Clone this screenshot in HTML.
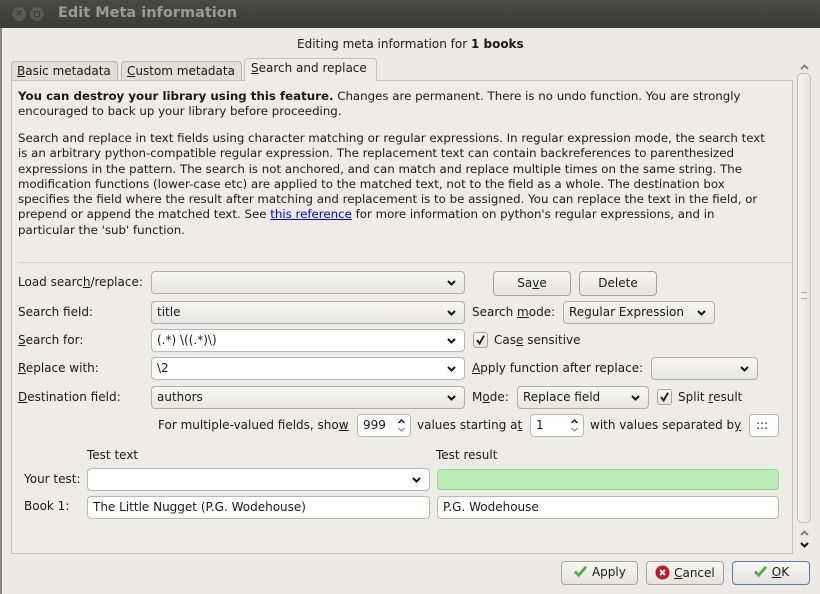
<!DOCTYPE html>
<html><head><meta charset="utf-8"><style>
*{margin:0;padding:0;box-sizing:border-box}
body{width:820px;height:594px;overflow:hidden;background:#edeae5;font-family:"DejaVu Sans","Liberation Sans",sans-serif;font-size:12px;color:#1a1a1a;position:relative}
.a{position:absolute;white-space:nowrap}
.tb{left:0;top:0;width:820px;height:28px;background:linear-gradient(#4a4945,#3c3b37);}
.cb{border:1px solid #b3ada4;border-radius:4px;background:linear-gradient(#f7f6f4,#e9e6e1);height:23px;padding:3px 0 0 5px}
.ed{border:1px solid #bfb8ae;border-radius:4px;background:#fff;height:23px;padding:3px 0 0 5px}
.arr{position:absolute;right:8px;top:8px;width:9px;height:6px}
.btn{border:1px solid #aaa39a;border-radius:4px;background:linear-gradient(#f8f7f5,#e6e2dc);height:25px;text-align:center;padding-top:4px}
.chk{width:15px;height:16px;border:1px solid #aaa39a;border-radius:3px;background:linear-gradient(#fbfaf8,#e6e2dc)}
u{text-decoration:underline}
.sp{position:absolute;right:4px;top:3px;width:9px;height:15px}
</style></head><body>
<svg width="0" height="0" style="position:absolute"><defs>
<symbol id="dn" viewBox="0 0 9 6"><path d="M1 1L4.5 4.5L8 1" fill="none" stroke="#111" stroke-width="2"/></symbol>
<symbol id="ud" viewBox="0 0 9 15"><path d="M1.5 5L4.5 2L7.5 5" fill="none" stroke="#222" stroke-width="1.5"/><path d="M1.5 10L4.5 13L7.5 10" fill="none" stroke="#999" stroke-width="1.5"/></symbol>
<symbol id="ck" viewBox="0 0 15 16"><path d="M3.5 8L6.5 12L11.5 3" fill="none" stroke="#222" stroke-width="2.2"/></symbol>
<symbol id="gk" viewBox="0 0 16 14"><path d="M2 7L6 11L14 2" fill="none" stroke="#56ac43" stroke-width="3"/></symbol>
</defs></svg>
<div class="a tb"></div>
<div class="a" style="left:12px;top:7px;width:14px;height:14px;border-radius:50%;background:#5a5954;color:#3c3b37;font-size:10px;text-align:center;line-height:14px;font-weight:bold">×</div>
<div class="a" style="left:30px;top:7px;width:14px;height:14px;border-radius:50%;background:#5a5954"><div style="margin:4px;width:6px;height:6px;border:1px solid #3c3b37"></div></div>
<div class="a" style="left:58px;top:5px;color:#9c9a94;font-weight:bold;font-size:14.5px">Edit Meta information</div>
<div class="a" style="left:0;top:28px;width:2px;height:566px;background:#8a857e"></div>

<div class="a" style="left:297px;top:37px">Editing meta information for <b>1 books</b></div>

<div class="a" style="left:11px;top:61px;width:107px;height:20px;border:1px solid #bdb6ad;border-bottom:none;border-radius:4px 4px 0 0;background:#e2ded8;padding:2px 0 0 5px"><u>B</u>asic metadata</div>
<div class="a" style="left:121px;top:61px;width:121px;height:20px;border:1px solid #bdb6ad;border-bottom:none;border-radius:4px 4px 0 0;background:#e2ded8;padding:2px 0 0 5px"><u>C</u>ustom metadata</div>
<div class="a" style="left:11px;top:80px;width:782px;height:474px;border:1px solid #c7c1b8;background:#efece8"></div>
<div class="a" style="left:244px;top:58px;width:133px;height:23px;border:1px solid #c7c1b8;border-bottom:none;border-radius:4px 4px 0 0;background:#efece8;padding:2px 0 0 6px"><u>S</u>earch and replace</div>

<div class="a" style="left:18px;top:89px;line-height:15.3px;font-size:11.8px"><b>You can destroy your library using this feature.</b> Changes are permanent. There is no undo function. You are strongly<br>encouraged to back up your library before proceeding.</div>
<div class="a" style="left:18px;top:131px;line-height:15.3px;font-size:11.8px">Search and replace in text fields using character matching or regular expressions. In regular expression mode, the search text<br>is an arbitrary python-compatible regular expression. The replacement text can contain backreferences to parenthesized<br>expressions in the pattern. The search is not anchored, and can match and replace multiple times on the same string. The<br>modification functions (lower-case etc) are applied to the matched text, not to the field as a whole. The destination box<br>specifies the field where the result after matching and replacement is to be assigned. You can replace the text in the field, or<br>prepend or append the matched text. See <span style="color:#0000ee;text-decoration:underline">this reference</span> for more information on python's regular expressions, and in<br>particular the 'sub' function.</div>
<div class="a" style="left:18px;top:262px;width:775px;height:1px;background:#d8d3cc"></div>

<div class="a" style="left:18px;top:275px">Load searc<u>h</u>/replace:</div>
<div class="a cb" style="left:151px;top:271px;width:314px"><svg class="arr"><use href="#dn"/></svg></div>
<div class="a btn" style="left:493px;top:271px;width:78px">Sa<u>v</u>e</div>
<div class="a btn" style="left:579px;top:271px;width:78px">Delete</div>

<div class="a" style="left:18px;top:305px">Search field:</div>
<div class="a cb" style="left:151px;top:301px;width:314px">title<svg class="arr"><use href="#dn"/></svg></div>
<div class="a" style="left:472px;top:305px">Search <u>m</u>ode:</div>
<div class="a cb" style="left:563px;top:301px;width:152px">Regular Expression<svg class="arr"><use href="#dn"/></svg></div>

<div class="a" style="left:18px;top:333px"><u>S</u>earch for:</div>
<div class="a ed" style="left:151px;top:329px;width:314px">(.*) \((.*)\)<svg class="arr"><use href="#dn"/></svg></div>
<div class="a chk" style="left:473px;top:332px"><svg width="13" height="14"><use href="#ck"/></svg></div>
<div class="a" style="left:494px;top:333px">Cas<u>e</u> sensitive</div>

<div class="a" style="left:18px;top:361px"><u>R</u>eplace with:</div>
<div class="a ed" style="left:151px;top:357px;width:314px">\2<svg class="arr"><use href="#dn"/></svg></div>
<div class="a" style="left:472px;top:361px"><u>A</u>pply function after replace:</div>
<div class="a cb" style="left:651px;top:357px;width:107px"><svg class="arr"><use href="#dn"/></svg></div>

<div class="a" style="left:18px;top:390px"><u>D</u>estination field:</div>
<div class="a cb" style="left:151px;top:386px;width:314px">authors<svg class="arr"><use href="#dn"/></svg></div>
<div class="a" style="left:472px;top:390px">M<u>o</u>de:</div>
<div class="a cb" style="left:517px;top:386px;width:132px">Replace field<svg class="arr"><use href="#dn"/></svg></div>
<div class="a chk" style="left:657px;top:389px"><svg width="13" height="14"><use href="#ck"/></svg></div>
<div class="a" style="left:678px;top:390px">Split <u>r</u>esult</div>

<div class="a" style="left:158px;top:418px">For multiple-valued fields, sho<u>w</u></div>
<div class="a ed" style="left:357px;top:414px;width:54px">999<svg class="sp"><use href="#ud"/></svg></div>
<div class="a" style="left:417px;top:418px">values starting a<u>t</u></div>
<div class="a ed" style="left:530px;top:414px;width:54px">1<svg class="sp"><use href="#ud"/></svg></div>
<div class="a" style="left:590px;top:418px">with values separated b<u>y</u></div>
<div class="a ed" style="left:749px;top:414px;width:30px;padding-left:6px">:::</div>

<div class="a" style="left:87px;top:448px">Test text</div>
<div class="a" style="left:436px;top:448px">Test result</div>
<div class="a" style="left:24px;top:472px">Your test:</div>
<div class="a ed" style="left:87px;top:468px;width:343px"><svg class="arr"><use href="#dn"/></svg></div>
<div class="a" style="left:437px;top:469px;width:342px;height:21px;border:1px solid #8fd88a;border-radius:4px;background:#bcecb6"></div>
<div class="a" style="left:24px;top:499px">Book 1:</div>
<div class="a ed" style="left:87px;top:496px;width:343px">The Little Nugget (P.G. Wodehouse)</div>
<div class="a ed" style="left:437px;top:496px;width:342px">P.G. Wodehouse</div>

<svg class="a" style="left:800px;top:64px" width="9" height="6"><path d="M1 5L4.5 1.5L8 5" fill="none" stroke="#777" stroke-width="1.8"/></svg>
<div class="a" style="left:797px;top:73px;width:14px;height:450px;border:1px solid #c6c0b7;border-radius:5px;background:linear-gradient(90deg,#f5f4f2,#e8e5e0)"></div>
<div class="a" style="left:801px;top:292px;width:6px;height:7px;border-top:1px solid #aaa;border-bottom:1px solid #aaa"></div>
<svg class="a" style="left:800px;top:530px" width="9" height="6"><path d="M1 5L4.5 1.5L8 5" fill="none" stroke="#777" stroke-width="1.8"/></svg>
<svg class="a" style="left:800px;top:542px" width="9" height="6"><use href="#dn"/></svg>

<div class="a btn" style="left:561px;top:561px;width:77px;height:24px;padding-top:3px"><svg width="15" height="13" style="vertical-align:-2px"><use href="#gk"/></svg> Apply</div>
<div class="a btn" style="left:646px;top:561px;width:78px;height:24px;padding-top:3px"><svg width="15" height="15" style="vertical-align:-3px"><circle cx="7.5" cy="7.5" r="7" fill="#c4191e"/><path d="M5 5L10 10M10 5L5 10" stroke="#fff" stroke-width="2"/></svg> <u>C</u>ancel</div>
<div class="a btn" style="left:732px;top:561px;width:78px;height:24px;padding-top:3px;border-color:#5c7fa3"><svg width="15" height="13" style="vertical-align:-2px"><use href="#gk"/></svg> <u>O</u>K</div>
</body></html>
